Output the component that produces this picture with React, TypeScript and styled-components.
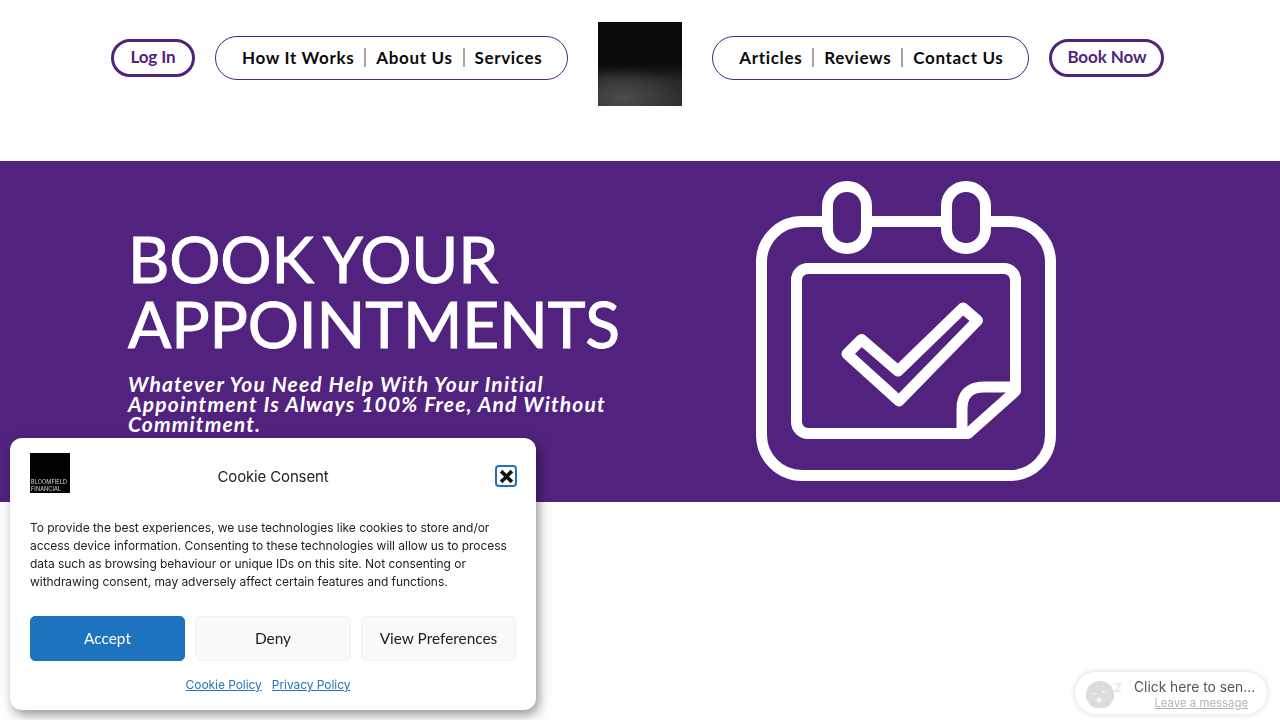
import styled, { createGlobalStyle } from 'styled-components';

const purple = '#51237f';
const navFont = `Lato, 'Noto Sans', sans-serif`;
const uiFont = `Inter, 'Liberation Sans', sans-serif`;

const leftLinks = ['How It Works', 'About Us', 'Services'];
const rightLinks = ['Articles', 'Reviews', 'Contact Us'];

function NavGroup({ links }: { links: string[] }) {
  return (
    <S.NavPill>
      {links.map((link) => (
        <S.NavLink key={link}>{link}</S.NavLink>
      ))}
    </S.NavPill>
  );
}

function CalendarIcon() {
  return (
    <S.Calendar viewBox="0 0 300 300" fill="none" stroke="#fff" strokeWidth="11" strokeLinejoin="round">
      <path d="M66 40.5H46A40.5 40.5 0 0 0 5.5 81V254A40.5 40.5 0 0 0 46 294.5H254A40.5 40.5 0 0 0 294.5 254V81A40.5 40.5 0 0 0 254 40.5H235" />
      <path d="M116 40.5H185" />
      <rect x="71.5" y="5.5" width="39" height="62" rx="19.5" />
      <rect x="190.5" y="5.5" width="39" height="62" rx="19.5" />
      <path d="M212 252.5H52A11.5 11.5 0 0 1 40.5 241V99A11.5 11.5 0 0 1 52 87.5H248A11.5 11.5 0 0 1 259.5 99V210Z" />
      <path d="M206 254V228Q206 206 228 206H259.5" />
      <path d="M207 127L221.5 139.5L143 220L91 173L105.5 158.5L142 190Z" />
    </S.Calendar>
  );
}

function SleepyFace() {
  return (
    <S.Sleepy viewBox="0 0 46 30">
      <circle cx="16" cy="17" r="14" fill="#dcdcdc" />
      <path d="M7 15q3 2 6 0M17 13q3 2 6 0" stroke="#f2f2f2" strokeWidth="1.5" fill="none" />
      <circle cx="15" cy="22" r="2.5" fill="#f2f2f2" />
      <path d="M31 6h6l-6 7h6" stroke="#e6e6e6" strokeWidth="1.4" fill="none" />
    </S.Sleepy>
  );
}

export default function App() {
  return (
    <>
      <GlobalStyle />
      <S.Header>
        <S.OutlineButton $width={84}>Log In</S.OutlineButton>
        <NavGroup links={leftLinks} />
        <S.Logo />
        <NavGroup links={rightLinks} />
        <S.OutlineButton $width={115}>Book Now</S.OutlineButton>
      </S.Header>

      <S.Hero>
        <S.HeroText>
          <S.Heading>
            BOOK YOUR
            <br />
            APPOINTMENTS
          </S.Heading>
          <S.Subheading>
            Whatever You Need Help With Your Initial
            <br />
            Appointment Is Always 100% Free, And Without
            <br />
            Commitment.
          </S.Subheading>
        </S.HeroText>
        <CalendarIcon />
      </S.Hero>

      <S.Consent>
        <S.ConsentHeader>
          <S.ConsentLogo>
            <span>BLOOMFIELD</span>
            <span>FINANCIAL</span>
          </S.ConsentLogo>
          <S.ConsentTitle>Cookie Consent</S.ConsentTitle>
          <S.Close aria-label="Close">
            <svg viewBox="0 0 14 14" width="15" height="15">
              <path d="M2 2L12 12M12 2L2 12" stroke="#111" strokeWidth="3.4" />
            </svg>
          </S.Close>
        </S.ConsentHeader>
        <S.ConsentBody>
          To provide the best experiences, we use technologies like cookies to store and/or
          <br />
          access device information. Consenting to these technologies will allow us to process
          <br />
          data such as browsing behaviour or unique IDs on this site. Not consenting or
          <br />
          withdrawing consent, may adversely affect certain features and functions.
        </S.ConsentBody>
        <S.ConsentButtons>
          <S.ConsentButton $primary>Accept</S.ConsentButton>
          <S.ConsentButton>Deny</S.ConsentButton>
          <S.ConsentButton>View Preferences</S.ConsentButton>
        </S.ConsentButtons>
        <S.ConsentLinks>
          <a href="#cookie">Cookie Policy</a>
          <a href="#privacy">Privacy Policy</a>
        </S.ConsentLinks>
      </S.Consent>

      <S.Chat>
        <SleepyFace />
        <S.ChatText>
          <S.ChatTitle>Click here to sen...</S.ChatTitle>
          <S.ChatLink>Leave a message</S.ChatLink>
        </S.ChatText>
      </S.Chat>
    </>
  );
}

const GlobalStyle = createGlobalStyle`
  html, body {
    margin: 0;
    height: 100%;
    overflow: hidden;
    background: #fff;
  }
`;

const S = {
  Header: styled.header`
    height: 161px;
    box-sizing: border-box;
    padding: 22px 0 0 111px;
    display: flex;
    align-items: flex-start;
    font-family: ${navFont};
  `,
  OutlineButton: styled.button<{ $width: number }>`
    height: 38px;
    width: ${({ $width }) => $width}px;
    flex: none;
    margin-top: 17px;
    padding: 0 0 3px;
    border: 3px solid ${purple};
    border-radius: 19px;
    background: #fff;
    color: ${purple};
    font-family: inherit;
    font-size: 17px;
    font-weight: 700;
    letter-spacing: -0.1px;
    white-space: nowrap;
  `,
  NavPill: styled.nav`
    height: 44px;
    box-sizing: border-box;
    flex: none;
    margin: 14px 30px 0 20px;
    padding: 0 25px 2px 26px;
    display: flex;
    align-items: center;
    border: 1px solid ${purple};
    border-radius: 22px;

    & ~ & {
      margin: 14px 20px 0 30px;
    }
  `,
  NavLink: styled.a`
    padding: 0 10px;
    font-size: 17px;
    line-height: 19px;
    font-weight: 700;
    letter-spacing: 0.65px;
    white-space: nowrap;
    color: #0b0b0b;
    border-left: 2px solid #a5a5a5;

    &:first-child {
      padding-left: 0;
      border-left: 0;
    }
    &:last-child {
      padding-right: 0;
    }
  `,
  Logo: styled.div`
    width: 84px;
    height: 84px;
    flex: none;
    background:
      radial-gradient(ellipse 60px 30px at 30% 90%, #4c4c4c 0%, rgba(76, 76, 76, 0) 100%),
      linear-gradient(180deg, #0a0a0a 0%, #0b0b0b 50%, #2a2a2a 72%, #2e2e2e 100%);
  `,
  Hero: styled.section`
    height: 341px;
    box-sizing: border-box;
    padding: 20px 224px 0 129px;
    display: flex;
    justify-content: space-between;
    align-items: flex-start;
    background: ${purple};
    color: #fff;
  `,
  HeroText: styled.div`
    margin-top: 45px;
    font-family: ${navFont};
  `,
  Heading: styled.h1`
    margin: 0 0 18px -1px;
    font-size: 64px;
    line-height: 65px;
    font-weight: 400;
    letter-spacing: -0.15px;
    word-spacing: -4.5px;
    -webkit-text-stroke: 1px #fff;
    white-space: nowrap;
  `,
  Subheading: styled.p`
    margin: 0 0 0 -1px;
    font-size: 21px;
    line-height: 20px;
    font-weight: 700;
    font-style: italic;
    letter-spacing: 1.15px;
    white-space: nowrap;
  `,
  Calendar: styled.svg`
    width: 300px;
    height: 300px;
    flex: none;
  `,
  Consent: styled.aside`
    position: fixed;
    left: 10px;
    top: 438px;
    width: 526px;
    height: 272px;
    box-sizing: border-box;
    padding: 15px 20px 0;
    border-radius: 12px;
    background: #fff;
    box-shadow: 3px 5px 12px rgba(0, 0, 0, 0.42);
    font-family: ${uiFont};
    color: #222;
  `,
  ConsentHeader: styled.div`
    height: 40px;
    display: grid;
    grid-template-columns: 40px 1fr 40px;
    align-items: center;
  `,
  ConsentLogo: styled.div`
    width: 40px;
    height: 40px;
    box-sizing: border-box;
    padding: 0 0 0 1px;
    display: flex;
    flex-direction: column;
    justify-content: flex-end;
    background: #000;
    color: #ddd;
    font-size: 5.5px;
    line-height: 7px;
    letter-spacing: 0.1px;
  `,
  ConsentTitle: styled.div`
    justify-self: center;
    margin-top: 7px;
    font-size: 15px;
    letter-spacing: -0.15px;
  `,
  Close: styled.button`
    width: 22px;
    height: 22px;
    justify-self: end;
    margin: 6px -1px 0 0;
    padding: 0;
    display: flex;
    align-items: center;
    justify-content: center;
    border: 2px solid #1e73be;
    border-radius: 4px;
    background: #fff;
  `,
  ConsentBody: styled.p`
    margin: 26px 0 0;
    font-size: 12px;
    line-height: 18px;
    letter-spacing: -0.04px;
    white-space: nowrap;
    color: #222;
  `,
  ConsentButtons: styled.div`
    margin-top: 25px;
    display: grid;
    grid-template-columns: 155px 156px 155px;
    gap: 10px;
  `,
  ConsentButton: styled.button<{ $primary?: boolean }>`
    height: 45px;
    padding: 0 0 2px;
    border: 1px solid ${({ $primary }) => ($primary ? '#1e73be' : '#f2f2f2')};
    border-radius: 5px;
    background: ${({ $primary }) => ($primary ? '#1e73be' : '#f9f9f9')};
    color: ${({ $primary }) => ($primary ? '#fff' : '#222')};
    font-family: ${navFont};
    font-size: 15.4px;
  `,
  ConsentLinks: styled.div`
    margin-top: 15px;
    padding-right: 10px;
    display: flex;
    justify-content: center;
    gap: 10px;
    font-size: 12px;
    line-height: 18px;
    letter-spacing: -0.06px;

    a {
      color: #2b74b5;
    }
  `,
  Chat: styled.div`
    position: fixed;
    left: 1075px;
    top: 672px;
    width: 192px;
    height: 42px;
    box-sizing: border-box;
    padding: 5px 0 0 9px;
    display: flex;
    gap: 4px;
    border-radius: 21px;
    background: #fff;
    box-shadow: 0 0 6px rgba(0, 0, 0, 0.16);
    font-family: ${uiFont};
    filter: blur(0.6px);
  `,
  Sleepy: styled.svg`
    width: 46px;
    height: 30px;
    margin-top: 1px;
    flex: none;
  `,
  ChatText: styled.div`
    display: flex;
    flex-direction: column;
    align-items: flex-end;
  `,
  ChatTitle: styled.div`
    font-size: 13.8px;
    line-height: 20px;
    color: #555;
    white-space: nowrap;
  `,
  ChatLink: styled.div`
    font-size: 11.4px;
    line-height: 12px;
    margin-right: 7px;
    color: #b5b5b5;
    text-decoration: underline;
    white-space: nowrap;
  `,
};
